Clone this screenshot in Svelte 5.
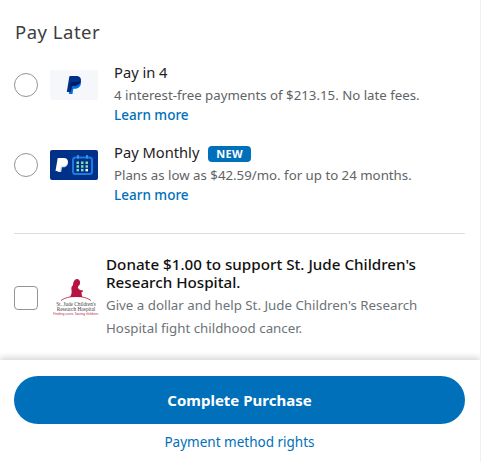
<script>
  const plans = [
    { name: 'Pay in 4', text: '4 interest-free payments of $213.15. No late fees.', logo: 'light' },
    { name: 'Pay Monthly', text: 'Plans as low as $42.59/mo. for up to 24 months.', logo: 'dark', badge: 'NEW' }
  ];
</script>

<div class="page">
  <div class="scroll">
    <h2>Pay Later</h2>

    {#each plans as p}
      <div class="plan">
        <span class="radio"></span>
        {#if p.logo === 'light'}
          <div class="logo light">
            <svg width="16" height="18" viewBox="0 0 16 18">
              <path fill="#0070e0" d="M5.500 4h6.200c1.300 0 2.500.4 3.100 1.300.9 3.700-1.500 7.400-5.200 7.400H8c-.4 0-.7.300-.8.600L6.500 18H2.800z" />
              <path fill="#003087" d="M4.200 0h6c3.100 0 5.200 1.700 4.700 4.700-.5 3.200-3.100 5-6.200 5H6.600c-.4 0-.7.300-.8.600l-.9 5.700H.8L3.300.8C3.400.3 3.700 0 4.200 0z" />
              <path fill="#001c64" d="M5 6h5.200c1.700 0 3.500-.4 4.600-1.500-.7 3.300-3.100 5.200-6.100 5.200H6.600c-.4 0-.7.300-.8.600L5.100 14.500H3.700z" />
            </svg>
          </div>
        {:else}
          <div class="logo dark">
            <svg width="40" height="20" viewBox="0 0 40 20">
              <path fill="#d3dcee" d="M5 7h5c1.500 0 3-.4 3.800-1.600 1 3.500-1 6.800-4.400 6.800H8l-.8 4.800H3.500z" />
              <path fill="#fff" d="M3.700 3h6c2.800 0 4.400 1.400 4 4-.4 2.800-2.400 4.200-5 4.200H6.800l-.8 4.800H1.500z" />
              <rect x="19" y="2.500" width="19" height="16.500" rx="2.500" fill="none" stroke="#1a7be0" stroke-width="2" />
              <path d="M24 0v3.500M33 0v3.500" stroke="#4ba3f0" stroke-width="1.500" />
              {#each [0, 1, 2] as r}
                {#each [0, 1, 2] as c}
                  <rect x={22.500 + c * 4.500} y={6.500 + r * 3.700} width="2.500" height="2.500" fill={r === 2 && c === 2 ? '#fff' : '#7fdcb4'} />
                {/each}
              {/each}
            </svg>
          </div>
        {/if}
        <div class="info">
          <div class="name">
            {p.name}
            {#if p.badge}<span class="badge">{p.badge}</span>{/if}
          </div>
          <div class="desc">{p.text}</div>
          <a href="#more" class="more">Learn more</a>
        </div>
      </div>
    {/each}

    <hr />

    <div class="donate">
      <span class="check"></span>
      <div class="jude">
        <svg width="32" height="22" viewBox="0 0 32 22">
          <path fill="#b5153f" transform="translate(2.500 0) scale(.85 1)" d="M9 18c.8-1.500 1.600-3 1.800-5 .1-1.200-.4-2.200-.4-3.500 0-1.500.8-2.600 2-3.200C12.300 3 14.500 0 17 0c2.300 0 4 1.800 3.700 4-.2 1.500-1 2.500-2 3.200-.6.500-.8 1.200-.2 2 .8 1 2 1.800 3.200 2 1 .1 2-.2 2.300.5.300.8-.6 1.300-1.600 1.500-.1 1.500.3 3 .8 4.800z" />
          <path fill="none" stroke="#b5153f" stroke-width=".8" d="M1 21.500c4-3 9-4 15-4s11 1 15 4" />
        </svg>
        <div class="jude-name">St. Jude Children's<br />Research Hospital</div>
        <div class="jude-tag">Finding cures. Saving children.</div>
      </div>
      <div class="donate-text">
        <div class="donate-title">Donate $1.00 to support St. Jude Children's Research Hospital.</div>
        <div class="donate-desc">Give a dollar and help St. Jude Children's Research Hospital fight childhood cancer.</div>
      </div>
    </div>
  </div>

  <div class="foot">
    <button>Complete Purchase</button>
    <a href="#rights" class="rights">Payment method rights</a>
  </div>
</div>

<style>
  :global(body) {
    background: #fff;
  }
  .page {
    width: 480px;
    height: 462px;
    overflow: hidden;
    display: flex;
    flex-direction: column;
    font-family: 'Noto Sans', sans-serif;
    color: #2c2e2f;
    border-right: 1px solid #f0f0f0;
  }
  .scroll {
    height: 360px;
    flex-shrink: 0;
    padding: 20px 15px 0 14px;
    box-sizing: border-box;
  }
  h2 {
    margin: 0 0 19px;
    padding-left: 1px;
    font-size: 18.500px;
    line-height: 24px;
    font-weight: 400;
    letter-spacing: 0.500px;
    color: #3c3e40;
  }
  .plan {
    display: flex;
    height: 80px;
    align-items: flex-start;
  }
  .radio {
    width: 22px;
    height: 22px;
    margin-top: 10px;
    border: 1px solid #929496;
    border-radius: 50%;
    flex-shrink: 0;
  }
  .logo {
    width: 48px;
    height: 30px;
    margin: 7px 16px 0 12px;
    border-radius: 2px;
    flex-shrink: 0;
    display: flex;
    align-items: center;
    justify-content: center;
  }
  .light {
    background: #f5f7fa;
  }
  .dark {
    background: #003087;
  }
  .info {
    font-size: 13.250px;
    line-height: 20px;
  }
  .name {
    font-size: 14.700px;
    line-height: 18px;
    color: #1f2122;
    height: 22px;
  }
  .badge {
    display: inline-block;
    background: #0070ba;
    color: #fff;
    font-size: 11px;
    font-weight: 700;
    line-height: 16px;
    padding: 0 8px;
    border-radius: 4px;
    margin-left: 5px;
    letter-spacing: 0.300px;
  }
  .desc {
    color: #5f6467;
  }
  .more,
  .rights {
    color: #0070ba;
    text-decoration: none;
  }
  .more {
    font-size: 13.500px;
    font-weight: 500;
  }
  hr {
    border: 0;
    border-top: 1px solid #dedede;
    margin: 10px 0 21px;
  }
  .donate {
    display: flex;
    align-items: center;
  }
  .check {
    width: 22px;
    height: 22px;
    border: 1px solid #929496;
    border-radius: 4px;
    flex-shrink: 0;
  }
  .jude {
    width: 44px;
    margin: 0 8px 0 16px;
    flex-shrink: 0;
    display: flex;
    flex-direction: column;
    align-items: center;
    text-align: center;
  }
  .jude-name {
    font-family: 'Liberation Serif', serif;
    font-size: 5.300px;
    line-height: 5px;
    margin-top: 1px;
    white-space: nowrap;
    color: #444;
  }
  .jude-tag {
    font-size: 3.200px;
    line-height: 5px;
    white-space: nowrap;
    color: #b5153f;
  }
  .donate-text {
    flex: 1;
    padding-right: 10px;
  }
  .donate-title {
    font-size: 15.200px;
    line-height: 18px;
    font-weight: 500;
    color: #111;
  }
  .donate-desc {
    font-size: 13.300px;
    line-height: 23px;
    color: #6c7378;
    margin-top: 3px;
    padding-right: 10px;
  }
  .foot {
    flex: 1;
    position: relative;
    box-shadow: 0 -3px 6px rgba(0, 0, 0, 0.15);
    background: #fff;
    display: flex;
    flex-direction: column;
    align-items: center;
    padding: 16px 15px 0 14px;
  }
  button {
    width: 100%;
    height: 48px;
    border: 0;
    border-radius: 24px;
    background: #0070ba;
    color: #fff;
    font-family: inherit;
    font-size: 15px;
    font-weight: 700;
  }
  .rights {
    margin-top: 9px;
    font-size: 13.500px;
    line-height: 18px;
  }
</style>
